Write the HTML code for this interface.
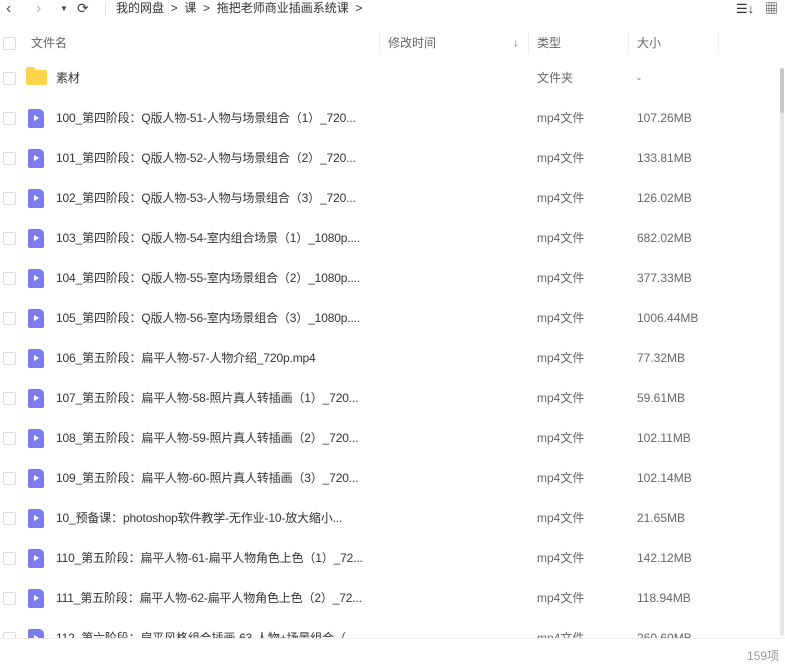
<!DOCTYPE html><html><head><meta charset="utf-8"><style>
body{margin:0;width:785px;height:662px;background:#fff;font-family:"Liberation Sans","Noto Sans CJK SC",sans-serif;font-size:12px;color:#333;overflow:hidden;position:relative}
.top{position:absolute;top:0;left:0;width:785px;height:28px}
.t{position:absolute;top:0;line-height:17px;font-size:12px;color:#333}
.hdr{position:absolute;top:28px;left:0;width:780px;height:30px;color:#666}
.hdr span{position:absolute;top:0;line-height:30px}
.sep{position:absolute;top:4px;width:1px;height:22px;background:#eee}
.list{position:absolute;top:58px;left:0;width:780px;height:580px;overflow:hidden}
.row{position:relative;height:40px}
.cb{position:absolute;left:3px;top:14px;width:11px;height:11px;border:1px solid #ddd;border-radius:2px}
.ic{position:absolute;left:28px;top:11px;width:16px;height:19px;background:#7c7cf0;border-radius:2px 5px 2px 2px}
.ic:after{content:"";position:absolute;left:6px;top:6px;border-left:5px solid #fff;border-top:3.5px solid transparent;border-bottom:3.5px solid transparent}
.fd{position:absolute;left:26px;top:12px;width:21px;height:15px;background:#fcd54a;border-radius:2px}
.fd:before{content:"";position:absolute;left:0;top:-3px;width:9px;height:4px;background:#fcd54a;border-radius:2px 2px 0 0}
.n,.ty,.sz{position:absolute;top:0;line-height:40px;white-space:nowrap}
.n{left:56px;font-size:12px;color:#333;letter-spacing:-0.15px}
.ty{left:537px;color:#666}
.sz{left:637px;color:#666}
.foot{position:absolute;top:638px;left:0;width:785px;height:24px;border-top:1px solid #eee}
</style></head><body>
<div class="top">
<span class="t" style="left:6px;font-size:16px;color:#555">&#8249;</span>
<span class="t" style="left:36px;font-size:16px;color:#bbb">&#8250;</span>
<span class="t" style="left:60px;font-size:8px;color:#444">&#9660;</span>
<span class="t" style="left:77px;font-size:14px;color:#444">&#10227;</span>
<div style="position:absolute;left:105px;top:2px;width:1px;height:14px;background:#e5e5e5"></div>
<span class="t" style="left:116px">我的网盘 &nbsp;&gt;&nbsp; 课 &nbsp;&gt;&nbsp; 拖把老师商业插画系统课 &nbsp;&gt;</span>
<span class="t" style="left:736px;font-size:13px;color:#333">☰↓</span>
<span class="t" style="left:765px;font-size:13px;color:#333">▦</span>
</div>
<div class="hdr">
<div class="cb" style="top:9px"></div>
<span style="left:31px">文件名</span>
<div class="sep" style="left:379px"></div>
<span style="left:388px">修改时间</span>
<span style="left:513px;color:#2a8ae8;font-size:11px">&#8595;</span>
<div class="sep" style="left:528px"></div>
<span style="left:537px">类型</span>
<div class="sep" style="left:628px"></div>
<span style="left:637px">大小</span>
<div class="sep" style="left:718px"></div>
</div>
<div class="list">
<div class="row"><div class="cb"></div><div class="fd"></div><span class="n">素材</span><span class="ty">文件夹</span><span class="sz">-</span></div>
<div class="row"><div class="cb"></div><div class="ic"></div><span class="n">100_第四阶段：Q版人物-51-人物与场景组合（1）_720...</span><span class="ty">mp4文件</span><span class="sz">107.26MB</span></div>
<div class="row"><div class="cb"></div><div class="ic"></div><span class="n">101_第四阶段：Q版人物-52-人物与场景组合（2）_720...</span><span class="ty">mp4文件</span><span class="sz">133.81MB</span></div>
<div class="row"><div class="cb"></div><div class="ic"></div><span class="n">102_第四阶段：Q版人物-53-人物与场景组合（3）_720...</span><span class="ty">mp4文件</span><span class="sz">126.02MB</span></div>
<div class="row"><div class="cb"></div><div class="ic"></div><span class="n">103_第四阶段：Q版人物-54-室内组合场景（1）_1080p....</span><span class="ty">mp4文件</span><span class="sz">682.02MB</span></div>
<div class="row"><div class="cb"></div><div class="ic"></div><span class="n">104_第四阶段：Q版人物-55-室内场景组合（2）_1080p....</span><span class="ty">mp4文件</span><span class="sz">377.33MB</span></div>
<div class="row"><div class="cb"></div><div class="ic"></div><span class="n">105_第四阶段：Q版人物-56-室内场景组合（3）_1080p....</span><span class="ty">mp4文件</span><span class="sz">1006.44MB</span></div>
<div class="row"><div class="cb"></div><div class="ic"></div><span class="n">106_第五阶段：扁平人物-57-人物介绍_720p.mp4</span><span class="ty">mp4文件</span><span class="sz">77.32MB</span></div>
<div class="row"><div class="cb"></div><div class="ic"></div><span class="n">107_第五阶段：扁平人物-58-照片真人转插画（1）_720...</span><span class="ty">mp4文件</span><span class="sz">59.61MB</span></div>
<div class="row"><div class="cb"></div><div class="ic"></div><span class="n">108_第五阶段：扁平人物-59-照片真人转插画（2）_720...</span><span class="ty">mp4文件</span><span class="sz">102.11MB</span></div>
<div class="row"><div class="cb"></div><div class="ic"></div><span class="n">109_第五阶段：扁平人物-60-照片真人转插画（3）_720...</span><span class="ty">mp4文件</span><span class="sz">102.14MB</span></div>
<div class="row"><div class="cb"></div><div class="ic"></div><span class="n">10_预备课：photoshop软件教学-无作业-10-放大缩小...</span><span class="ty">mp4文件</span><span class="sz">21.65MB</span></div>
<div class="row"><div class="cb"></div><div class="ic"></div><span class="n">110_第五阶段：扁平人物-61-扁平人物角色上色（1）_72...</span><span class="ty">mp4文件</span><span class="sz">142.12MB</span></div>
<div class="row"><div class="cb"></div><div class="ic"></div><span class="n">111_第五阶段：扁平人物-62-扁平人物角色上色（2）_72...</span><span class="ty">mp4文件</span><span class="sz">118.94MB</span></div>
<div class="row"><div class="cb"></div><div class="ic"></div><span class="n">112_第六阶段：扁平风格组合插画-63-人物+场景组合（...</span><span class="ty">mp4文件</span><span class="sz">260.60MB</span></div>
</div>
<div style="position:absolute;left:780px;top:68px;width:4px;height:568px;background:#e8e8e8;border-radius:2px"></div>
<div style="position:absolute;left:780px;top:68px;width:4px;height:45px;background:#c8c8c8;border-radius:2px"></div>
<div class="foot"><span style="position:absolute;right:6px;top:8px;color:#999;font-size:12px">159项</span></div>
</body></html>
